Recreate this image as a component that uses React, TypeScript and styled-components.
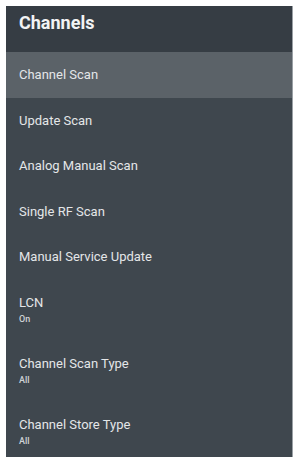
import * as React from 'react'
import styled, { createGlobalStyle } from 'styled-components';

const GlobalStyle = createGlobalStyle`
    html, body {
        margin: 0;
        padding: 0;
        background: #ffffff;
        height: 457px;
        overflow: hidden;
    }
`;

const Page = styled.div`
    padding: 6px 3px 0 6px;
    font-family: Roboto, "Liberation Sans", sans-serif;
`;

const Panel = styled.div`
    background-color: #3f474e;
    height: 451px;
    border-right: 1px solid #9aa0a5;
    display: flex;
    flex-direction: column;
`;

const Header = styled.div`
    height: 46px;
    flex-shrink: 0;
    background-color: #363d44;
    display: flex;
    align-items: center;
    padding: 0 13px 14px;
    box-sizing: border-box;
    color: #f2f3f4;
    font-size: 18px;
    font-weight: 700;
`;

const Row = styled.div<{ $active?: boolean; $tall?: boolean }>`
    height: ${p => (p.$tall ? '61px' : '45.5px')};
    padding: 0 13px;
    display: flex;
    flex-direction: column;
    justify-content: center;
    background-color: ${p => (p.$active ? '#5b6268' : 'transparent')};
    flex-shrink: 0;
`;

const Label = styled.div`
    color: #e4e6e8;
    font-size: 13px;
    line-height: 15px;
`;

const Value = styled.div`
    color: #d0d3d6;
    font-size: 9px;
    font-weight: 500;
    line-height: 12px;
    margin-top: 3px;
`;

type Item = { label: string; value?: string };

const items: Item[] = [
    { label: 'Channel Scan' },
    { label: 'Update Scan' },
    { label: 'Analog Manual Scan' },
    { label: 'Single RF Scan' },
    { label: 'Manual Service Update' },
    { label: 'LCN', value: 'On' },
    { label: 'Channel Scan Type', value: 'All' },
    { label: 'Channel Store Type', value: 'All' },
];

export default function App() {
    return (
        <Page>
            <GlobalStyle />
            <Panel>
                <Header>Channels</Header>
                {items.map((item, index) => (
                    <Row key={item.label} $active={index === 0} $tall={!!item.value}>
                        <Label>{item.label}</Label>
                        {item.value && <Value>{item.value}</Value>}
                    </Row>
                ))}
            </Panel>
        </Page>
    )
}
